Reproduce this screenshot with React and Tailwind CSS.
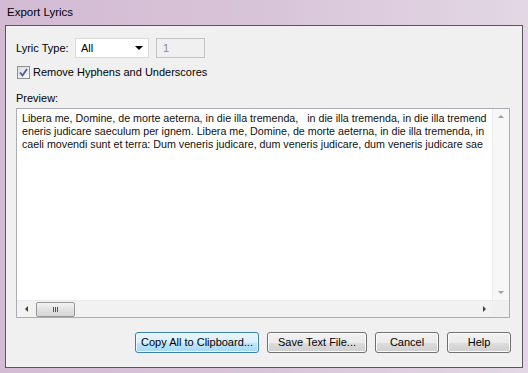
import React from "react";

const ui = { fontFamily: '"Liberation Sans", Arial, sans-serif' };

const lines = [
  "Libera me, Domine, de morte aeterna, in die illa tremenda,   in die illa tremenda, in die illa tremend",
  "eneris judicare saeculum per ignem. Libera me, Domine, de morte aeterna, in die illa tremenda, in",
  "caeli movendi sunt et terra: Dum veneris judicare, dum veneris judicare, dum veneris judicare sae",
];

/** Windows 7 style push button. */
function Button({ children, width, focused }) {
  const skin = focused
    ? "border-[#3c7fb1] bg-[linear-gradient(#e8f5fc_0%,#d9f0fc_50%,#bee6fd_51%,#a7d9f5_100%)] shadow-[inset_0_0_0_1px_#f0f9fe]"
    : "border-[#707070] bg-[linear-gradient(#f2f2f2_0%,#ebebeb_50%,#dddddd_51%,#cfcfcf_100%)] shadow-[inset_0_0_0_1px_#fcfcfc]";
  return (
    <div
      className={`h-[21px] rounded-[3px] border flex items-center justify-center whitespace-nowrap text-[11px] text-black ${skin}`}
      style={{ width }}
    >
      {children}
    </div>
  );
}

function Arrow({ dir }) {
  const cls = {
    up: "border-l-[3px] border-r-[3px] border-b-[3px] border-l-transparent border-r-transparent border-b-[#a0a0a0]",
    down: "border-l-[3px] border-r-[3px] border-t-[3px] border-l-transparent border-r-transparent border-t-[#a0a0a0]",
    left: "border-t-[3px] border-b-[3px] border-r-[3px] border-t-transparent border-b-transparent border-r-[#404040]",
    right: "border-t-[3px] border-b-[3px] border-l-[3px] border-t-transparent border-b-transparent border-l-[#404040]",
  }[dir];
  return <span className={`w-0 h-0 ${cls}`} />;
}

export default function App() {
  return (
    <div
      className="w-[528px] h-[373px] overflow-hidden flex flex-col bg-[linear-gradient(90deg,#d3bbd3_0%,#d8c4d9_50%,#e3d7e4_100%)]"
      style={ui}
    >
      {/* ── Title bar ─────────────────────────── */}
      <div className="h-[25px] shrink-0 flex items-center pl-[7px] pt-[1px] text-[11.5px] text-black">
        Export Lyrics
      </div>

      {/* ── Client area ───────────────────────── */}
      <div className="ml-[5px] mr-[5px] h-[343px] border border-[#5a5560] bg-[#f0f0f0] flex flex-col pl-[10px] pr-[11px] pt-[12px]">
        {/* Lyric type row */}
        <div className="flex items-center h-[20px] text-[11px]">
          <span className="w-[59px]">Lyric Type:</span>
          <div className="w-[74px] h-[20px] bg-white border border-[#d9d9d9] flex items-center pl-[5px] pr-[5px]">
            <span className="flex-1">All</span>
            <span className="w-0 h-0 border-l-[4px] border-r-[4px] border-t-[4px] border-l-transparent border-r-transparent border-t-black" />
          </div>
          <div className="ml-[7px] w-[49px] h-[20px] border border-[#c4c4c4] flex items-center pl-[6px] text-[#8a8a8a]">
            1
          </div>
        </div>

        {/* Checkbox */}
        <div className="flex items-center mt-[7px] h-[14px] text-[11px]">
          <div className="ml-[1px] w-[13px] h-[13px] border border-[#8e8f8f] bg-[linear-gradient(135deg,#dcdcdc,#fbfbfb)] flex items-center justify-center">
            <svg width="9" height="9" viewBox="0 0 9 9">
              <path d="M1 4.5 L3.5 7.5 L8 1" fill="none" stroke="#4a5f97" strokeWidth="1.8" />
            </svg>
          </div>
          <span className="ml-[3px]">Remove Hyphens and Underscores</span>
        </div>

        {/* Preview */}
        <div className="mt-[12px] text-[11px] leading-[14px]">Preview:</div>
        <div className="mt-[3px] w-[494px] h-[210px] border border-[#abadb3] bg-white flex flex-col">
          <div className="flex flex-1 min-h-0">
            <div className="flex-1 overflow-hidden pl-[5px] pt-[3px] text-[10.7px] leading-[13px] whitespace-pre text-[#111]">
              {lines.map((l, i) => (
                <div key={i}>{l}</div>
              ))}
            </div>
            <div className="w-[17px] bg-[#f7f7f7] border-l border-[#ececec] flex flex-col items-center justify-between py-[6px]">
              <Arrow dir="up" />
              <Arrow dir="down" />
            </div>
          </div>
          <div className="h-[17px] flex border-t border-[#ececec]">
            <div className="flex-1 bg-[#f2f2f2] flex items-center pl-[8px] pr-[6px]">
              <Arrow dir="left" />
              <div className="ml-[8px] w-[39px] h-[15px] rounded-[2px] border border-[#979797] bg-[linear-gradient(#f3f3f3,#e2e2e2_50%,#d6d6d6)] flex items-center justify-center gap-[1px]">
                <span className="w-px h-[5px] bg-[#555]" />
                <span className="w-px h-[5px] bg-[#555]" />
                <span className="w-px h-[5px] bg-[#555]" />
              </div>
              <div className="flex-1" />
              <Arrow dir="right" />
            </div>
            <div className="w-[17px] bg-[#f0f0f0]" />
          </div>
        </div>

        {/* Buttons */}
        <div className="mt-[14px] flex justify-end gap-[8px]">
          <Button width={124} focused>
            Copy All to Clipboard...
          </Button>
          <Button width={100}>Save Text File...</Button>
          <Button width={64}>Cancel</Button>
          <Button width={64}>Help</Button>
        </div>
      </div>
    </div>
  );
}
